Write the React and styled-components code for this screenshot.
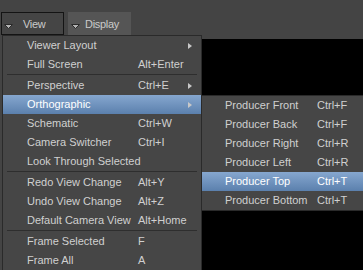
import React from "react";
import styled, { createGlobalStyle, css } from "styled-components";

const Global = createGlobalStyle`
  html, body { margin: 0; padding: 0; background: #000; }
  body { font-family: "Liberation Sans", Arial, sans-serif; font-size: 11px; }
`;

const Page = styled.div`
  position: relative;
  width: 363px;
  height: 270px;
  overflow: hidden;
  display: flex;
  flex-direction: column;
  background: #000;
`;

const Toolbar = styled.div`
  height: 39px;
  box-sizing: border-box;
  background: #444444;
  display: flex;
  align-items: flex-start;
  gap: 4px;
  padding: 12px 0 0 1px;
`;

const ToolButton = styled.div`
  width: 63px;
  height: 23px;
  box-sizing: border-box;
  display: flex;
  align-items: center;
  padding-left: 2px;
  border: 1px solid ${(p) => (p.$open ? "#141414" : "#555555")};
  background: ${(p) => (p.$open ? "#454545" : "#555555")};
  color: #cacaca;
  letter-spacing: -0.3px;
`;

const ButtonLabel = styled.span`
  margin-left: ${(p) => p.$gap}px;
  line-height: 20px;
`;

const DownIcon = styled.svg`
  display: block;
  margin-top: 6px;
  flex: none;
`;

const Viewport = styled.div`
  flex: 1;
  background: #000;
  border-left: 2px solid #444444;
`;

const Menu = styled.div`
  position: absolute;
  left: 2px;
  top: 35px;
  width: 200px;
  box-sizing: border-box;
  background: #464646;
  border: 1px solid #2a2a2a;
  color: #d0d0d0;
`;

const SubMenu = styled(Menu)`
  left: 198px;
  top: 0;
  width: 200px;
  z-index: 2;
`;

const Row = styled.div`
  position: relative;
  height: 19px;
  display: grid;
  grid-template-columns: ${(p) => p.$labelWidth}px 1fr 4px;
  align-items: center;
  padding: 0 9px 0 ${(p) => p.$indent}px;
  white-space: nowrap;
  ${(p) =>
    p.$active &&
    css`
      background: linear-gradient(#86a7cf, #5b80ad);
      color: #ffffff;
    `}
`;

const Label = styled.span`
  line-height: 19px;
`;

const Shortcut = styled.span`
  line-height: 19px;
`;

const Arrow = styled.span`
  width: 0;
  height: 0;
  border-top: 3px solid transparent;
  border-bottom: 3px solid transparent;
  border-left: 4px solid #c8c8c8;
`;

const Separator = styled.div`
  height: 2px;
  box-sizing: border-box;
  margin: 0 4px;
  border-top: 1px solid #2e2e2e;
`;

const SEP = "sep";

const mainItems = [
  { label: "Viewer Layout", arrow: true },
  { label: "Full Screen", shortcut: "Alt+Enter" },
  SEP,
  { label: "Perspective", shortcut: "Ctrl+E", arrow: true },
  { label: "Orthographic", arrow: true, active: true, sub: true },
  { label: "Schematic", shortcut: "Ctrl+W" },
  { label: "Camera Switcher", shortcut: "Ctrl+I" },
  { label: "Look Through Selected" },
  SEP,
  { label: "Redo View Change", shortcut: "Alt+Y" },
  { label: "Undo View Change", shortcut: "Alt+Z" },
  { label: "Default Camera View", shortcut: "Alt+Home" },
  SEP,
  { label: "Frame Selected", shortcut: "F" },
  { label: "Frame All", shortcut: "A" },
];

const subItems = [
  { label: "Producer Front", shortcut: "Ctrl+F" },
  { label: "Producer Back", shortcut: "Ctrl+F" },
  { label: "Producer Right", shortcut: "Ctrl+R" },
  { label: "Producer Left", shortcut: "Ctrl+R" },
  { label: "Producer Top", shortcut: "Ctrl+T", active: true },
  { label: "Producer Bottom", shortcut: "Ctrl+T" },
];

function Down() {
  return (
    <DownIcon width="9" height="5" viewBox="0 0 9 5">
      <polygon points="0.5,0.5 8.5,0.5 4.5,4.5" fill="#b4b4b4" stroke="#2a2a2a" strokeWidth="1" />
    </DownIcon>
  );
}

function Items({ items, indent, labelWidth, children }) {
  return items.map((it, i) =>
    it === SEP ? (
      <Separator key={i} />
    ) : (
      <Row key={i} $active={it.active} $indent={indent} $labelWidth={labelWidth}>
        <Label>{it.label}</Label>
        <Shortcut>{it.shortcut || ""}</Shortcut>
        {it.arrow ? <Arrow /> : <span />}
        {it.sub && children}
      </Row>
    )
  );
}

export default function App() {
  return (
    <>
      <Global />
      <Page>
        <Toolbar>
          <ToolButton $open>
            <Down />
            <ButtonLabel $gap={10}>View</ButtonLabel>
          </ToolButton>
          <ToolButton>
            <Down />
            <ButtonLabel $gap={5}>Display</ButtonLabel>
          </ToolButton>
        </Toolbar>
        <Viewport />
        <Menu>
          <Items items={mainItems} indent={24} labelWidth={111}>
            <SubMenu>
              <Items items={subItems} indent={23} labelWidth={92} />
            </SubMenu>
          </Items>
        </Menu>
      </Page>
    </>
  );
}
